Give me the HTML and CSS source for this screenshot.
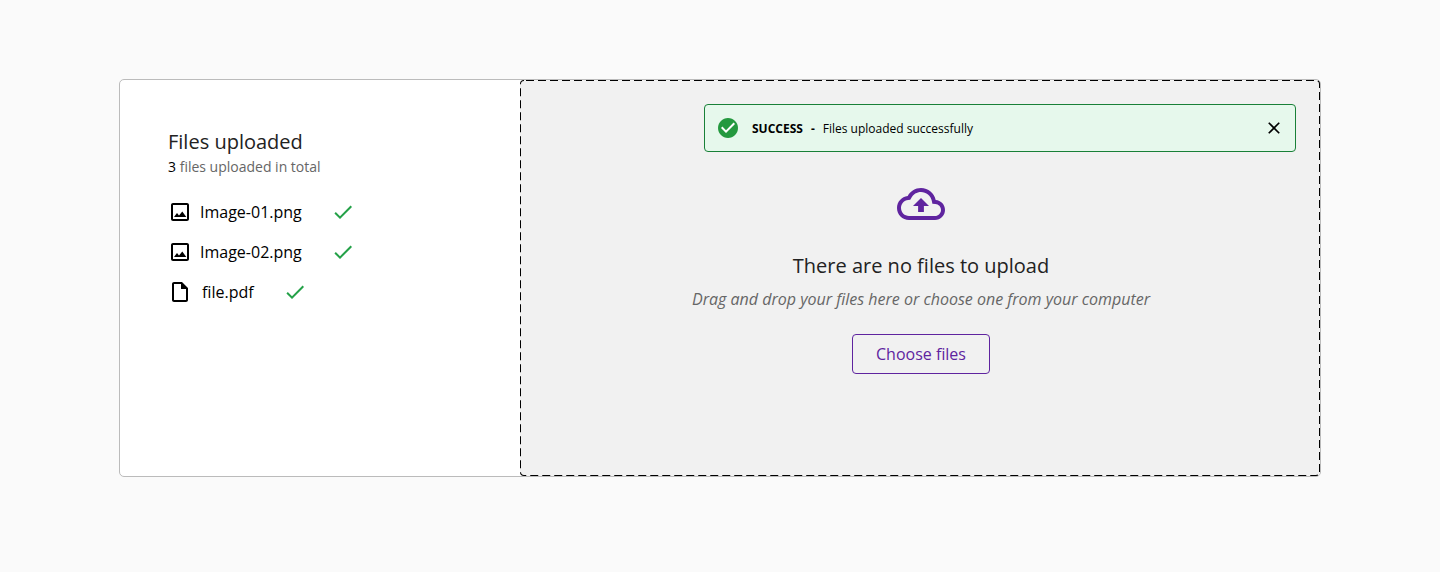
FILE: index.html
```html
<!DOCTYPE html>
<html lang="en">
<head>
<meta charset="utf-8">
<meta name="viewport" content="width=device-width, initial-scale=1">
<title>File upload</title>
<link rel="stylesheet" href="styles.css">
</head>
<body>
<svg class="sprite" aria-hidden="true">
  <symbol id="icon-image" viewBox="0 0 24 24"><path d="M19 5v14H5V5h14m0-2H5c-1.100 0-2 .9-2 2v14c0 1.100.9 2 2 2h14c1.100 0 2-.9 2-2V5c0-1.100-.9-2-2-2z"/><path d="M6 17l3-4 2 2.500L14.300 11.500 18.300 17z"/></symbol>
  <symbol id="icon-check" viewBox="0 0 24 24"><path d="M9 16.170L4.830 12l-1.420 1.410L9 19 21 7l-1.410-1.410z"/></symbol>
  <symbol id="icon-file" viewBox="0 0 24 24"><path fill-rule="evenodd" d="M6 2c-1.100 0-2 .9-2 2v16c0 1.100.9 2 2 2h12c1.100 0 2-.9 2-2V8l-6-6H6zm0 2h7v5h5v11H6V4z"/></symbol>
</svg>
<main class="uploader">
  <section class="summary">
    <h2 class="title">Files uploaded</h2>
    <p class="count"><span class="count-number">3</span> files uploaded in total</p>
    <ul class="files">
      <li class="file"><svg class="icon"><use href="#icon-image"/></svg><span class="file-name">Image-01.png</span><svg class="icon icon-done"><use href="#icon-check"/></svg></li>
      <li class="file"><svg class="icon"><use href="#icon-image"/></svg><span class="file-name">Image-02.png</span><svg class="icon icon-done"><use href="#icon-check"/></svg></li>
      <li class="file file-document"><svg class="icon"><use href="#icon-file"/></svg><span class="file-name">file.pdf</span><svg class="icon icon-done"><use href="#icon-check"/></svg></li>
    </ul>
  </section>
  <section class="dropzone">
    <svg class="dropzone-outline" aria-hidden="true"><rect class="dropzone-dashes" width="100%" height="100%" rx="4"/></svg>
    <div class="alert" role="status">
      <svg class="icon icon-success" viewBox="0 0 24 24"><path d="M12 2C6.480 2 2 6.480 2 12s4.480 10 10 10 10-4.480 10-10S17.520 2 12 2z"/><path class="tick" d="M10 17l-5-5 1.410-1.410L10 14.170l7.590-7.590L19 8z"/></svg>
      <strong class="alert-kind">SUCCESS</strong>
      <strong>-</strong>
      <span class="alert-text">Files uploaded successfully</span>
      <button class="alert-close" type="button" aria-label="Close"><svg class="icon-close" viewBox="0 0 24 24"><path d="M19 6.410L17.590 5 12 10.590 6.410 5 5 6.410 10.590 12 5 17.590 6.410 19 12 13.410 17.590 19 19 17.590 13.410 12z"/></svg></button>
    </div>
    <div class="prompt">
      <svg class="icon-cloud" viewBox="0 0 24 24"><path d="M19.350 10.040C18.670 6.590 15.640 4 12 4 9.110 4 6.600 5.640 5.350 8.040 2.340 8.360 0 10.910 0 14c0 3.310 2.690 6 6 6h13c2.760 0 5-2.240 5-5 0-2.640-2.050-4.780-4.650-4.960zM19 18H6c-2.210 0-4-1.790-4-4 0-2.050 1.530-3.760 3.560-3.970l1.070-.11.500-.95C8.080 7.140 9.940 6 12 6c2.620 0 4.880 1.860 5.390 4.430l.3 1.500 1.530.11c1.560.1 2.780 1.410 2.780 2.960 0 1.650-1.350 3-3 3zM8 13h2.550v3h2.900v-3H16l-4-4z"/></svg>
      <h2 class="title">There are no files to upload</h2>
      <p class="hint">Drag and drop your files here or choose one from your computer</p>
      <button class="choose" type="button">Choose files</button>
    </div>
  </section>
</main>
</body>
</html>
```

FILE: styles.css
```css
* {
  box-sizing: border-box;
}

body {
  margin: 0;
  padding: 79px 119px;
  background: #fafafa;
  color: #000;
  font-family: "Open Sans", "Noto Sans", sans-serif;
  font-size: 16px;
  line-height: 24px;
}

h2, p, ul {
  margin: 0;
  padding: 0;
}

button {
  font: inherit;
  cursor: pointer;
}

svg {
  display: block;
  flex: none;
}

.sprite {
  position: absolute;
  width: 0;
  height: 0;
}

.uploader {
  display: grid;
  grid-template-columns: 1fr 2fr;
  border: 1px solid #bbb;
  border-radius: 5px;
  background: #fff;
}

.summary {
  padding: 48px;
}

.title {
  color: #222;
  font-size: 20px;
  font-weight: 400;
  line-height: 28px;
}

.count {
  color: #666;
  font-size: 14px;
  line-height: 22px;
}

.count-number {
  color: #000;
}

.files {
  display: grid;
  gap: 16px;
  margin-top: 22px;
  list-style: none;
}

.file {
  display: flex;
  align-items: center;
}

.file-name {
  margin: 0 29px 0 8px;
}

.file-document .file-name {
  margin-left: 10px;
}

.icon {
  width: 24px;
  height: 24px;
}

.icon-done {
  fill: #24a148;
}

.dropzone {
  position: relative;
  padding: 24px 24px 102px;
  border-radius: 4px;
  background: #f1f1f1;
}

.dropzone-outline {
  position: absolute;
  inset: 0;
  width: 100%;
  height: 100%;
  border-radius: 4px;
}

.dropzone-dashes {
  fill: none;
  stroke: #000;
  stroke-width: 2px;
  stroke-dasharray: 8 4;
  stroke-dashoffset: -2px;
}

.alert {
  position: relative;
  display: flex;
  align-items: center;
  gap: 8px;
  max-width: 592px;
  min-height: 48px;
  margin-left: auto;
  padding: 0 10px 0 11px;
  border: 1px solid #198038;
  border-radius: 4px;
  background: #e6f8ec;
  font-size: 12px;
  line-height: 25px;
}

.icon-success {
  fill: #24993f;
}

.tick {
  fill: #fff;
}

.alert-kind {
  margin-left: 4px;
}

.alert-close {
  margin-left: auto;
  padding: 1px;
  border: 0;
  background: none;
}

.icon-close {
  width: 20px;
  height: 20px;
}

.prompt {
  position: relative;
  display: flex;
  flex-direction: column;
  align-items: center;
  padding: 28px 0 0 2px;
  text-align: center;
}

.icon-cloud {
  width: 48px;
  height: 48px;
  margin-bottom: 24px;
  fill: #5f249f;
}

.hint {
  margin-top: 7px;
  color: #666;
  font-style: italic;
}

.choose {
  height: 40px;
  margin-top: 23px;
  padding: 0 23px;
  border: 1px solid #5f249f;
  border-radius: 4px;
  background: transparent;
  color: #5f249f;
}
```
